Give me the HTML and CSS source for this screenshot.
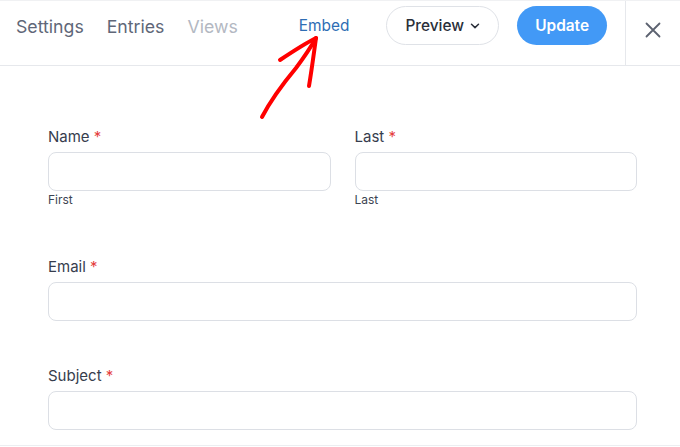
FILE: index.html
```html
<!DOCTYPE html>
<html>
   <head>
      <meta name="viewport" content="width=device-width, initial-scale=1">
      <link rel="stylesheet" href="styles.css">
   </head>
   <body>
      <div class="topbar">
         <div class="tabs">
            <a class="tab">Settings</a>
            <a class="tab">Entries</a>
            <a class="tab muted">Views</a>
         </div>
         <a class="embed">Embed</a>
         <button class="btn preview">Preview
            <svg width="10" height="6" viewBox="0 0 10 6"><path d="M1.5 1.2 L5 4.6 L8.5 1.2" fill="none" stroke="#2a2f3a" stroke-width="1.5" stroke-linecap="round" stroke-linejoin="round"/></svg>
         </button>
         <button class="btn update">Update</button>
         <div class="closebox">
            <svg width="16" height="16" viewBox="0 0 16 16"><path d="M1.5 1.5 L14.5 14.5 M14.5 1.5 L1.5 14.5" stroke="#5c6270" stroke-width="1.8" stroke-linecap="round"/></svg>
         </div>
      </div>

      <svg class="arrow" width="80" height="100" viewBox="0 0 80 100">
         <path d="M22 87 C32 68 46 50 56 38 C62 30 68 22 76 8" fill="none" stroke="#ff0000" stroke-width="4" stroke-linecap="round"/>
         <path d="M40 30 C52 22 64 14 76 8 C74 22 72 38 69 56" fill="none" stroke="#ff0000" stroke-width="4" stroke-linecap="round" stroke-linejoin="round"/>
      </svg>

      <div class="form">
         <div class="row two">
            <div class="field">
               <label class="label">Name <span class="req">*</span></label>
               <div class="input"></div>
               <div class="sub">First</div>
            </div>
            <div class="field">
               <label class="label">Last <span class="req">*</span></label>
               <div class="input"></div>
               <div class="sub">Last</div>
            </div>
         </div>
         <div class="row">
            <div class="field">
               <label class="label">Email <span class="req">*</span></label>
               <div class="input"></div>
            </div>
         </div>
         <div class="row last">
            <div class="field">
               <label class="label">Subject <span class="req">*</span></label>
               <div class="input"></div>
            </div>
         </div>
      </div>
   </body>
</html>
```

FILE: styles.css
```css
html {
overflow: hidden;
}
body {
margin: 0;
font-family: "Inter", "Liberation Sans", sans-serif;
background: #fff;
color: #363d4d;
position: relative;
}
.topbar {
height: 66px;
border-top: 1px solid #f0f1f3;
border-bottom: 1px solid #e6e8ec;
box-sizing: border-box;
display: flex;
align-items: flex-start;
padding-top: 5px;
}
.tabs {
display: flex;
gap: 23px;
padding-left: 16px;
padding-top: 10px;
}
.tab {
font-size: 17.7px;
line-height: 22px;
color: #5f6778;
}
.tab.muted {
color: #b3b8c2;
}
.embed {
font-size: 15.4px;
line-height: 20px;
color: #2e6db4;
margin-left: 61px;
padding-top: 10px;
}
.btn {
font-family: inherit;
height: 39px;
border-radius: 20px;
font-size: 15.4px;
font-weight: 500;
cursor: pointer;
display: flex;
align-items: center;
justify-content: center;
padding-top: 1px;
}
.preview {
margin-left: 37px;
width: 113px;
background: #fff;
border: 1px solid #dfe2e7;
color: #2a2f3a;
gap: 6px;
}
.update {
margin-left: 18px;
width: 90px;
background: #4299f6;
border: none;
color: #fff;
font-weight: 600;
}
.closebox {
margin-left: 18px;
margin-top: -5px;
height: 64px;
width: 55px;
border-left: 1px solid #e6e8ec;
display: flex;
align-items: center;
justify-content: center;
padding-bottom: 6px;
box-sizing: border-box;
}
.arrow {
position: absolute;
left: 240px;
top: 30px;
}
.form {
padding: 61px 43px 0 48px;
height: 380px;
box-sizing: border-box;
border-bottom: 1px solid #eceef1;
}
.row {
margin-bottom: 45px;
}
.row.two {
display: grid;
grid-template-columns: 1fr 1fr;
gap: 24px;
margin-bottom: 49px;
}
.row.last {
margin-bottom: 0;
}
.label {
display: block;
font-size: 15px;
line-height: 20px;
margin-bottom: 5px;
color: #363d4d;
}
.req {
color: #e53e3e;
}
.input {
height: 37px;
border: 1px solid #dcdfe5;
border-radius: 8px;
}
.sub {
font-size: 12px;
line-height: 16px;
margin-top: 1px;
color: #3d4452;
}
```
